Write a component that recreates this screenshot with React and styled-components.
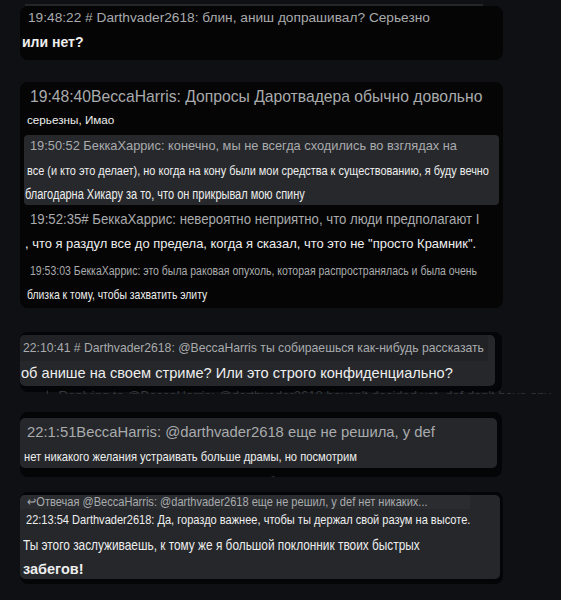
import React from "react";
import styled, { createGlobalStyle } from "styled-components";

const Global = createGlobalStyle`
  html, body {
    margin: 0;
    background: #0e1013;
  }
  body {
    font-family: "Liberation Sans", Arial, sans-serif;
  }
`;

const Page = styled.div`
  width: 561px;
  height: 600px;
  overflow: hidden;
  display: flex;
  flex-direction: column;
  padding: 4px 0 0 20px;
  box-sizing: border-box;
`;

const Rule = styled.div`
  height: 2px;
  width: 458px;
  margin-left: 5px;
  background: #24262a;
`;

const Card = styled.div`
  width: 483px;
  margin-top: ${(p) => p.$mt || 0}px;
  padding: ${(p) => p.$pad || "0"};
  box-sizing: border-box;
  background: #050505;
  border-radius: 8px;
  overflow: hidden;
`;

const Frame = styled.div`
  width: ${(p) => p.$w}px;
  margin-top: ${(p) => p.$mt || 0}px;
  padding: ${(p) => p.$pad};
  box-sizing: border-box;
  background: #040506;
  border-radius: 8px;
`;

const Panel = styled.div`
  background: #25272b;
  border-radius: 5px;
  padding: ${(p) => p.$pad || "0"};
  overflow: hidden;
`;

const Quote = styled.div`
  margin: 3px 4px 0 4px;
  padding-bottom: 2px;
  background: #26282c;
  border-radius: 4px;
`;

const Line = styled.div`
  height: ${(p) => p.$h}px;
  line-height: ${(p) => p.$h}px;
  padding-left: ${(p) => p.$x || 0}px;
  font-size: ${(p) => p.$size}px;
  font-weight: ${(p) => (p.$bold ? 700 : 400)};
  color: ${(p) => (p.$muted ? "#a9abad" : "#eeeeee")};
  white-space: nowrap;
  overflow: hidden;
  background: ${(p) => p.$bg || "transparent"};
  width: ${(p) => (p.$w ? `${p.$w}px` : "auto")};
  box-sizing: border-box;
`;

/* condensed text, standing in for Arial Narrow */
const Narrow = styled.span`
  display: inline-block;
  transform: scaleX(${(p) => p.$sx || 0.82});
  transform-origin: left center;
`;

const Ghost = styled.div`
  height: ${(p) => p.$h}px;
  margin-top: ${(p) => p.$mt || 0}px;
  padding-left: ${(p) => p.$x || 0}px;
  font-size: 13px;
  line-height: 16px;
  color: #34373c;
  white-space: nowrap;
  overflow: hidden;

  span.g {
    color: #2f7a2a;
  }
  span.b {
    color: #3f7b90;
  }
`;

export default function App() {
  return (
    <Page>
      <Global />
      <Rule />
      <Card $pad="0 0 6px 0">
        <Line $h={24} $size={13.7} $muted $x={8}>
          19:48:22 # Darthvader2618: блин, аниш допрашивал? Серьезно
        </Line>
        <Line $h={24} $size={14} $bold $x={2}>
          или нет?
        </Line>
      </Card>

      <Card $mt={22} $pad="4px 0 5px 0">
        <Line $h={22} $size={15.7} $muted $x={10}>
          19:48:40BeccaHarris: Допросы Даротвадера обычно довольно
        </Line>
        <Line $h={24} $size={11.7} $x={7}>
          серьезны, Имао
        </Line>
        <Quote>
          <Line $h={22} $size={12.8} $muted $x={6}>
            19:50:52 БеккаХаррис: конечно, мы не всегда сходились во взглядах на
          </Line>
          <Line $h={28} $size={13.5} $x={3}>
            <Narrow $sx={0.81}>
              все (и кто это делает), но когда на кону были мои средства к существованию, я буду вечно
            </Narrow>
          </Line>
          <Line $h={18} $size={14} $x={1}>
            <Narrow $sx={0.785}>благодарна Хикару за то, что он прикрывал мою спину</Narrow>
          </Line>
        </Quote>
        <Line $h={28} $size={14.5} $muted $x={10}>
          <Narrow $sx={0.91}>
            19:52:35# БеккаХаррис: невероятно неприятно, что люди предполагают I
          </Narrow>
        </Line>
        <Line $h={22} $size={12.95} $x={5}>
          , что я раздул все до предела, когда я сказал, что это не "просто Крамник".
        </Line>
        <Line $h={32} $size={12} $muted $x={10}>
          <Narrow $sx={0.875}>
            19:53:03 БеккаХаррис: это была раковая опухоль, которая распространялась и была очень
          </Narrow>
        </Line>
        <Line $h={16} $size={13} $x={7}>
          <Narrow $sx={0.8}>близка к тому, чтобы захватить элиту</Narrow>
        </Line>
      </Card>

      <Frame $w={482} $mt={24} $pad="3px 7px 6px 0">
        <Panel $pad="0 0 1px 0">
          <Line $h={26} $size={12.2} $muted $x={3} $bg="#202226" $w={468}>
            22:10:41 # Darthvader2618: @BeccaHarris ты собираешься как-нибудь рассказать
          </Line>
          <Line $h={24} $size={14.6} $x={1}>
            об анише на своем стриме? Или это строго конфиденциально?
          </Line>
        </Panel>
      </Frame>
      <Ghost $h={6} $mt={-4} $x={24}>
        ↳ Replying to @BeccaHarris: @darthvader2618 haven't decided yet, def don't have any
      </Ghost>

      <Frame $w={482} $mt={18} $pad="6px 5px 9px 0">
        <Panel>
          <Line $h={28} $size={14.8} $muted $x={7}>
            22:1:51BeccaHarris: @darthvader2618 еще не решила, у def
          </Line>
          <Line $h={22} $size={13} $x={4}>
            <Narrow $sx={0.86}>нет никакого желания устраивать больше драмы, но посмотрим</Narrow>
          </Line>
        </Panel>
      </Frame>
      <Ghost $h={3} $mt={-3} $x={54}>
        <span className="b">Bal</span> <span className="g">BeccaHarris</span> ответила на сообщение в чате
      </Ghost>

      <Frame $w={483} $mt={15} $pad="3px 3px 5px 0">
        <Panel>
          <Line $h={14} $size={13} $muted $x={7} $bg="#2a2c30" $w={450}>
            <Narrow $sx={0.85}>
              ↩Отвечая @BeccaHarris: @darthvader2618 еще не решил, у def нет никаких...
            </Narrow>
          </Line>
          <Line $h={22} $size={13} $x={6}>
            <Narrow $sx={0.85}>
              22:13:54 Darthvader2618: Да, гораздо важнее, чтобы ты держал свой разум на высоте.
            </Narrow>
          </Line>
          <Line $h={28} $size={15} $x={3}>
            <Narrow $sx={0.79}>
              Ты этого заслуживаешь, к тому же я большой поклонник твоих быстрых
            </Narrow>
          </Line>
          <Line $h={20} $size={14.5} $bold $x={3}>
            забегов!
          </Line>
        </Panel>
      </Frame>
    </Page>
  );
}
